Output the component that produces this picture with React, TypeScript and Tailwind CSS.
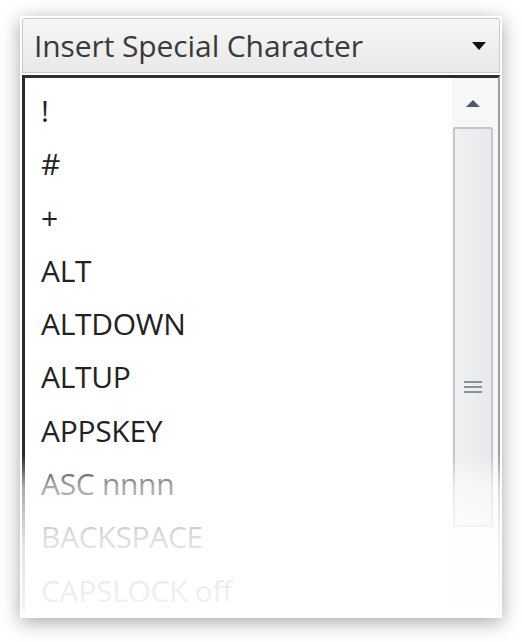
const items = ['!', '#', '+', 'ALT', 'ALTDOWN', 'ALTUP', 'APPSKEY', 'ASC nnnn', 'BACKSPACE', 'CAPSLOCK off']

export default function App() {
  return (
    <div className="h-[642px] w-[522px] bg-white pl-[20px] pt-[16px] font-['Open_Sans',sans-serif]">
      <div className="relative flex h-[602px] w-[482px] flex-col bg-white shadow-[0_4px_18px_rgba(0,0,0,0.35)]">
        {/* combo header */}
        <div className="mx-[2px] mt-[2px] flex h-[55px] items-center justify-between rounded-t-[3px] border border-[#c9c9c9] bg-gradient-to-b from-[#f6f6f6] to-[#e9e9e9] pl-[11px] pr-[12px]">
          <span className="text-[30px] tracking-[-0.1px] text-[#3a3a3a]">Insert Special Character</span>
          <svg width="16" height="10" viewBox="0 0 16 10">
            <path d="M1 1 L15 1 L8 9 Z" fill="#111" />
          </svg>
        </div>

        {/* list panel */}
        <div className="relative mx-[2px] mt-[2px] flex flex-1 border-l-[3px] border-t-[3px] border-r-[2px] border-l-[#2a2a2a] border-t-[#2f2f2f] border-r-[#9aa0a8]">
          <div className="flex flex-1 overflow-hidden">
            <ul className="flex-1 pl-[16px] pt-[6px] text-[30px] tracking-[-0.3px] text-[#222]">
              {items.map((it) => (
                <li key={it} className="h-[53.3px] pt-[12px] leading-[30px] last:h-auto">
                  {it}
                </li>
              ))}
            </ul>

            {/* scrollbar */}
            <div className="flex w-[46px] flex-col items-center bg-[#f7f7f8] pr-[4px] pt-[21px]">
              <svg width="16" height="9" viewBox="0 0 16 9">
                <path d="M8 1 L15 8 L1 8 Z" fill="#4b5670" />
              </svg>
              <div className="mt-[19px] flex h-[400px] w-[40px] items-center justify-center rounded-[2px] border-2 border-[#c3c7cd] bg-gradient-to-r from-[#f0f1f3] to-[#e7e9ec]">
                <div className="mt-[120px] flex flex-col gap-[3px]">
                  <div className="h-[2px] w-[18px] bg-[#8a909c]" />
                  <div className="h-[2px] w-[18px] bg-[#8a909c]" />
                  <div className="h-[2px] w-[18px] bg-[#8a909c]" />
                </div>
              </div>
            </div>
          </div>

          {/* fade over list, scrollbar and borders */}
          <div className="absolute bottom-0 -left-[3px] -right-[2px] h-[157px] bg-[linear-gradient(to_bottom,rgba(255,255,255,0)_0%,rgba(255,255,255,0.6)_20%,rgba(255,255,255,0.86)_55%,rgba(255,255,255,0.95)_100%)]" />
        </div>
        <div className="h-[6px]" />
      </div>
    </div>
  )
}
